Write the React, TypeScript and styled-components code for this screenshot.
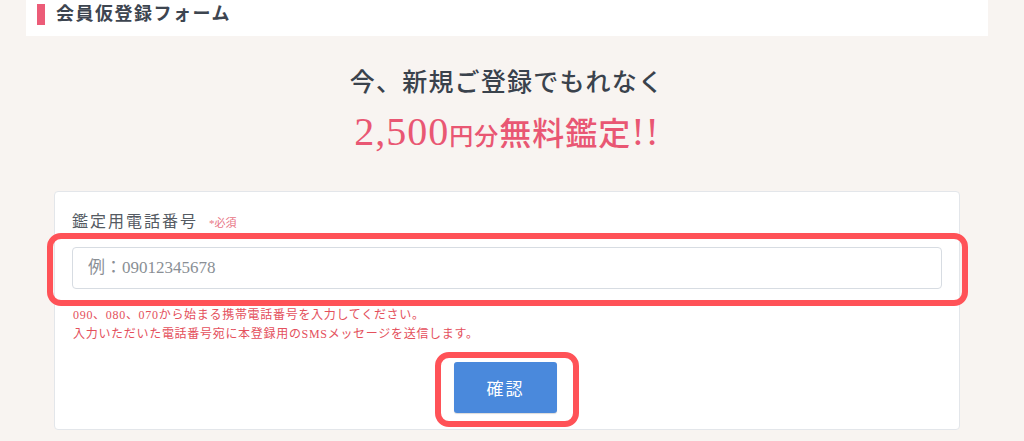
import React from 'react';
import styled, { createGlobalStyle } from 'styled-components';

const GlobalStyle = createGlobalStyle`
  html, body {
    margin: 0;
    padding: 0;
    background: #f8f4f1;
  }
  body {
    font-family: 'Liberation Serif', 'Noto Sans CJK JP', serif;
    color: #3a424c;
  }
`;

const Page = styled.div`
  width: 962px;
  margin-left: 26px;
  display: flex;
  flex-direction: column;
`;

const Header = styled.header`
  height: 36px;
  background: #ffffff;
  display: flex;
  align-items: flex-start;
  gap: 11px;
  padding: 4px 0 0 11px;
  box-sizing: border-box;
`;

const HeaderBar = styled.span`
  width: 8px;
  height: 21px;
  background: #ec5c78;
`;

const Title = styled.h1`
  margin: 0;
  font-size: 18px;
  line-height: 21px;
  font-weight: 700;
  letter-spacing: 1.5px;
  color: #3d4550;
`;

const Lead = styled.p`
  margin: 29px 0 0;
  text-align: center;
  font-size: 25px;
  line-height: 35px;
  letter-spacing: 1.2px;
  font-weight: 500;
  color: #3a424c;
`;

const Offer = styled.p`
  margin: 7px 0 0;
  text-align: center;
  line-height: 50px;
  color: #e95773;
  letter-spacing: 1px;
  font-weight: 500;
`;

const OfferPart = styled.span<{ $size: number }>`
  font-size: ${(p) => p.$size}px;
`;

const Card = styled.section`
  margin: 26px 28px 0;
  background: #ffffff;
  border: 1px solid #e3e6ea;
  border-radius: 4px;
  padding: 20px 17px 2px;
  display: flex;
  flex-direction: column;
`;

const Label = styled.label`
  display: flex;
  align-items: baseline;
  gap: 11px;
  font-size: 16px;
  line-height: 20px;
  letter-spacing: 2px;
  color: #555b63;
`;

const Required = styled.span`
  font-size: 11px;
  letter-spacing: 0;
  color: #e87585;
`;

const Highlight = styled.div<{ $pad: string }>`
  border: 6px solid #ff5257;
  border-radius: 14px;
  padding: ${(p) => p.$pad};
`;

const InputHighlight = styled(Highlight)`
  margin: 0 -26px 0 -25px;
`;

const ButtonHighlight = styled(Highlight)`
  align-self: center;
  margin-top: 8px;
`;

const PhoneInput = styled.input`
  display: block;
  width: 100%;
  height: 42px;
  box-sizing: border-box;
  border: 1px solid #d7dce2;
  border-radius: 4px;
  padding: 0 15px;
  font-family: inherit;
  font-size: 17px;
  letter-spacing: 0;
  color: #333;
  background: #fff;
  &::placeholder {
    color: #8a8f95;
  }
`;

const Help = styled.p`
  margin: 0;
  padding-left: 1px;
  font-size: 12px;
  line-height: 19px;
  letter-spacing: 0.7px;
  color: #e4505c;
`;

const SubmitButton = styled.button`
  width: 103px;
  height: 51px;
  border: none;
  border-radius: 3px;
  background: #4a89dc;
  box-shadow: 0 1px 1px rgba(0, 0, 0, 0.15);
  color: #ffffff;
  font-family: inherit;
  font-size: 17px;
  letter-spacing: 2px;
  cursor: pointer;
`;

const App: React.FC = () => {
  return (
    <>
      <GlobalStyle />
      <Page>
        <Header>
          <HeaderBar />
          <Title>会員仮登録フォーム</Title>
        </Header>
        <Lead>今、新規ご登録でもれなく</Lead>
        <Offer>
          <OfferPart $size={40}>2,500</OfferPart>
          <OfferPart $size={24}>円分</OfferPart>
          <OfferPart $size={32}>無料鑑定</OfferPart>
          <OfferPart $size={40}>!!</OfferPart>
        </Offer>
        <Card>
          <Label htmlFor="tel">
            鑑定用電話番号
            <Required>*必須</Required>
          </Label>
          <InputHighlight $pad="8px 20px 11px 19px">
            <PhoneInput id="tel" type="tel" placeholder="例：09012345678" />
          </InputHighlight>
          <Help>
            090、080、070から始まる携帯電話番号を入力してください。
            <br />
            入力いただいた電話番号宛に本登録用のSMSメッセージを送信します。
          </Help>
          <ButtonHighlight $pad="4px 16px 8px 13px">
            <SubmitButton type="button">確認</SubmitButton>
          </ButtonHighlight>
        </Card>
      </Page>
    </>
  );
};

export default App;
